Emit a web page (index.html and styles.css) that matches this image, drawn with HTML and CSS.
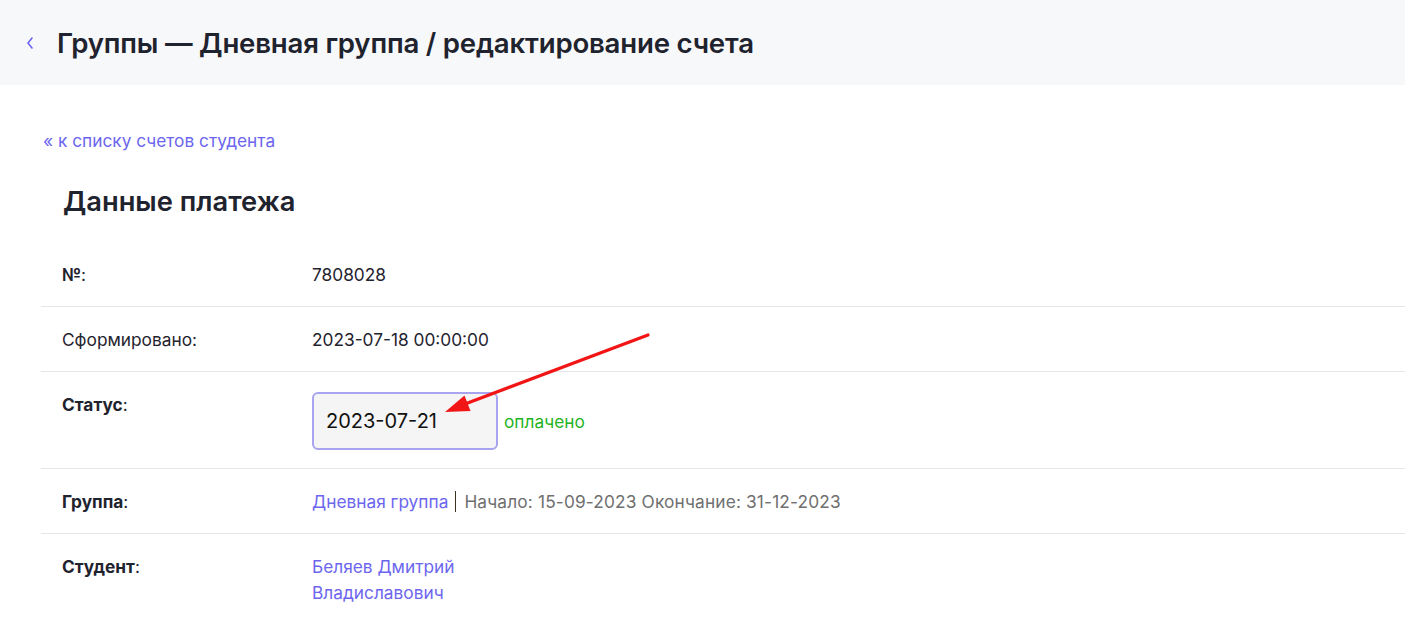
FILE: index.html
```html
<!DOCTYPE html>
<html lang="ru">
<head>
  <meta charset="UTF-8" />
  <meta name="viewport" content="width=device-width, initial-scale=1" />
  <title>Редактирование счета</title>
  <link rel="stylesheet" href="styles.css">
</head>
<body>

<!-- Шапка -->
<header class="topbar">
  <a class="back" href="#" title="Назад">
    <svg width="10" height="14" viewBox="0 0 10 14"><path d="M7 2 L3 7 L7 12" fill="none" stroke="#6b63f0" stroke-width="1.6" stroke-linecap="round" stroke-linejoin="round"/></svg>
  </a>
  <h1>Группы — Дневная группа / редактирование счета</h1>
</header>

<main class="content">
  <a class="crumb" href="#">« к списку счетов студента</a>

  <h2>Данные платежа</h2>

  <div class="table-wrap">
    <table class="details">
      <tr>
        <td class="label"><b>№</b>:</td>
        <td>7808028</td>
      </tr>
      <tr>
        <td class="label">Сформировано:</td>
        <td>2023-07-18 00:00:00</td>
      </tr>
      <tr class="status-row">
        <td class="label"><b>Статус</b>:</td>
        <td>
          <div class="status">
            <input class="date-input" type="text" value="2023-07-21" />
            <span class="paid">оплачено</span>
          </div>
        </td>
      </tr>
      <tr>
        <td class="label"><b>Группа</b>:</td>
        <td class="nowrap"><a href="#">Дневная группа</a><span class="period">Начало: 15-09-2023 Окончание: 31-12-2023</span></td>
      </tr>
      <tr>
        <td class="label"><b>Студент</b>:</td>
        <td><a class="student" href="#">Беляев Дмитрий Владиславович</a></td>
      </tr>
    </table>

    <!-- стрелка-пометка -->
    <svg class="annot" width="230" height="100" viewBox="0 0 230 100">
      <line x1="207" y1="7" x2="24" y2="76" stroke="#f21515" stroke-width="3.2" stroke-linecap="round"/>
      <polygon points="4,84 29.5,83 23.5,67.5" fill="#f21515"/>
    </svg>
  </div>
</main>

</body>
</html>
```

FILE: styles.css
```css
:root {
  --text: #1f232e;
  --muted: #6f6f6f;
  --accent: #6c66ee;
  --line: #e6e6e6;
  --head-bg: #f7f8fa;
}

body {
  margin: 0;
  font-family: Inter, 'Noto Sans', sans-serif;
  font-size: 17.3px;
  color: var(--text);
  background: #fff;
}

a {
  color: var(--accent);
  text-decoration: none;
}

.topbar {
  height: 85px;
  background: var(--head-bg);
  display: flex;
  align-items: center;
  padding-left: 25px;
}

.back {
  display: flex;
  width: 20px;
  margin-right: 12px;
}

.topbar h1 {
  margin: 0;
  font-size: 27.6px;
  font-weight: 600;
  letter-spacing: -0.2px;
}

.content {
  padding: 44px 0 0 41px;
}

.crumb {
  display: inline-block;
  margin-left: 2px;
  line-height: 24px;
}

h2 {
  margin: 33px 0 24px 22px;
  font-size: 27.3px;
  font-weight: 600;
  line-height: 32px;
}

.table-wrap {
  position: relative;
}

.details {
  width: 100%;
  border-collapse: collapse;
  line-height: 25px;
}

.details td {
  padding: 20px 20px 19px;
  border-bottom: 1px solid var(--line);
  vertical-align: top;
}

.details .status-row td {
  padding-bottom: 18px;
}

.details tr:last-child td {
  border-bottom: none;
  line-height: 26px;
}

.details td.label {
  width: 210px;
  padding-left: 21px;
}

.nowrap {
  white-space: nowrap;
}

.status {
  display: flex;
  align-items: center;
}

.date-input {
  width: 186px;
  height: 58px;
  box-sizing: border-box;
  padding: 0 12px;
  border: 2px solid #a9a4ef;
  border-radius: 6px;
  background: #f5f5f5;
  font-family: Inter, 'Noto Sans', sans-serif;
  font-size: 20px;
  color: #111;
}

.paid {
  margin-left: 6px;
  color: #1fb31f;
}

.period {
  color: var(--muted);
  border-left: 1px solid #3a3320;
  margin-left: 7px;
  padding-left: 8px;
  letter-spacing: 0.15px;
}

.student {
  display: block;
  width: 150px;
}

.annot {
  position: absolute;
  left: 400px;
  top: 86px;
  pointer-events: none;
}
```
